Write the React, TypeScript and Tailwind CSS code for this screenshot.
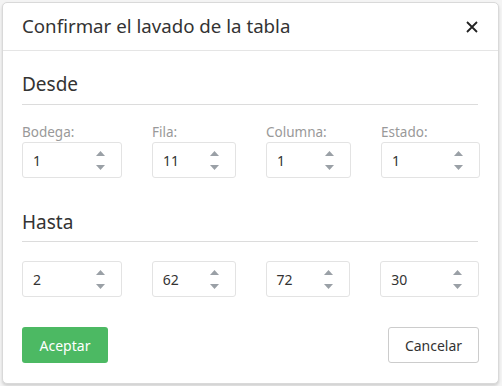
import React from 'react';

const font = { fontFamily: '"Segoe UI", "Noto Sans", "Open Sans", sans-serif' };

interface SpinProps {
  value: string;
  width: string;
}

const SpinInput: React.FC<SpinProps> = ({ value, width }) => (
  <div className={`${width} h-[36px] border border-[#e3e3e3] rounded-[3px] bg-white flex items-center justify-between pl-[10px] pr-[16px]`}>
    <span className="text-[14px] text-[#333]">{value}</span>
    <div className="flex flex-col items-center gap-[9px]">
      <svg width="9" height="5" viewBox="0 0 9 5"><path d="M4.5 0L9 5H0z" fill="#9aa0a6" /></svg>
      <svg width="9" height="5" viewBox="0 0 9 5"><path d="M0 0h9L4.5 5z" fill="#9aa0a6" /></svg>
    </div>
  </div>
);

const widths = ['w-[100px]', 'w-[84px]', 'w-[85px]', 'w-[99px]'];

export default function App() {
  const desde = [
    { label: 'Bodega:', value: '1' },
    { label: 'Fila:', value: '11' },
    { label: 'Columna:', value: '1' },
    { label: 'Estado:', value: '1' },
  ];
  const hasta = ['2', '62', '72', '30'];

  return (
    <div className="w-[502px] h-[386px] bg-[#f4f4f4] pl-[2px] pt-[2px]" style={font}>
      <div className="w-[497px] h-[382px] bg-white border border-[#d9d9d9] rounded-[5px] shadow-[0_2px_3px_rgba(0,0,0,0.15)] flex flex-col">
        {/* Header */}
        <div className="h-[48px] flex items-center justify-between pl-[19px] pr-[20px] border-b border-[#e5e5e5]">
          <h4 className="text-[18.7px] text-[#333] leading-none">Confirmar el lavado de la tabla</h4>
          <svg width="12" height="12" viewBox="0 0 12 12">
            <path d="M1 1L11 11M11 1L1 11" stroke="#222" strokeWidth="1.8" />
          </svg>
        </div>

        {/* Body */}
        <div className="px-[19px] pt-[20px]">
          <div className="text-[19px] leading-[27px] text-[#333] pb-[6px] border-b border-[#dcdcdc] mr-[1px]">Desde</div>
          <div className="flex gap-[30px] mt-[17px]">
            {desde.map((d, i) => (
              <div key={d.label} className="flex flex-col">
                <label className="text-[13.5px] leading-[20px] text-[#999]">{d.label}</label>
                <SpinInput value={d.value} width={widths[i]} />
              </div>
            ))}
          </div>

          <div className="text-[19px] leading-[27px] text-[#333] pb-[5px] border-b border-[#dcdcdc] mt-[31px] mr-[1px]">Hasta</div>
          <div className="flex gap-[30px] mt-[19px]">
            {hasta.map((v, i) => (
              <SpinInput key={i} value={v} width={widths[i]} />
            ))}
          </div>
        </div>

        {/* Footer */}
        <div className="flex justify-between items-center px-[19px] mt-[30px]">
          <button className="w-[86px] h-[36px] bg-[#4cb963] rounded-[3px] text-white text-[14px]">Aceptar</button>
          <button className="w-[91px] h-[36px] bg-white border border-[#ccc] rounded-[3px] text-[#333] text-[14px]">Cancelar</button>
        </div>
      </div>
    </div>
  );
}
